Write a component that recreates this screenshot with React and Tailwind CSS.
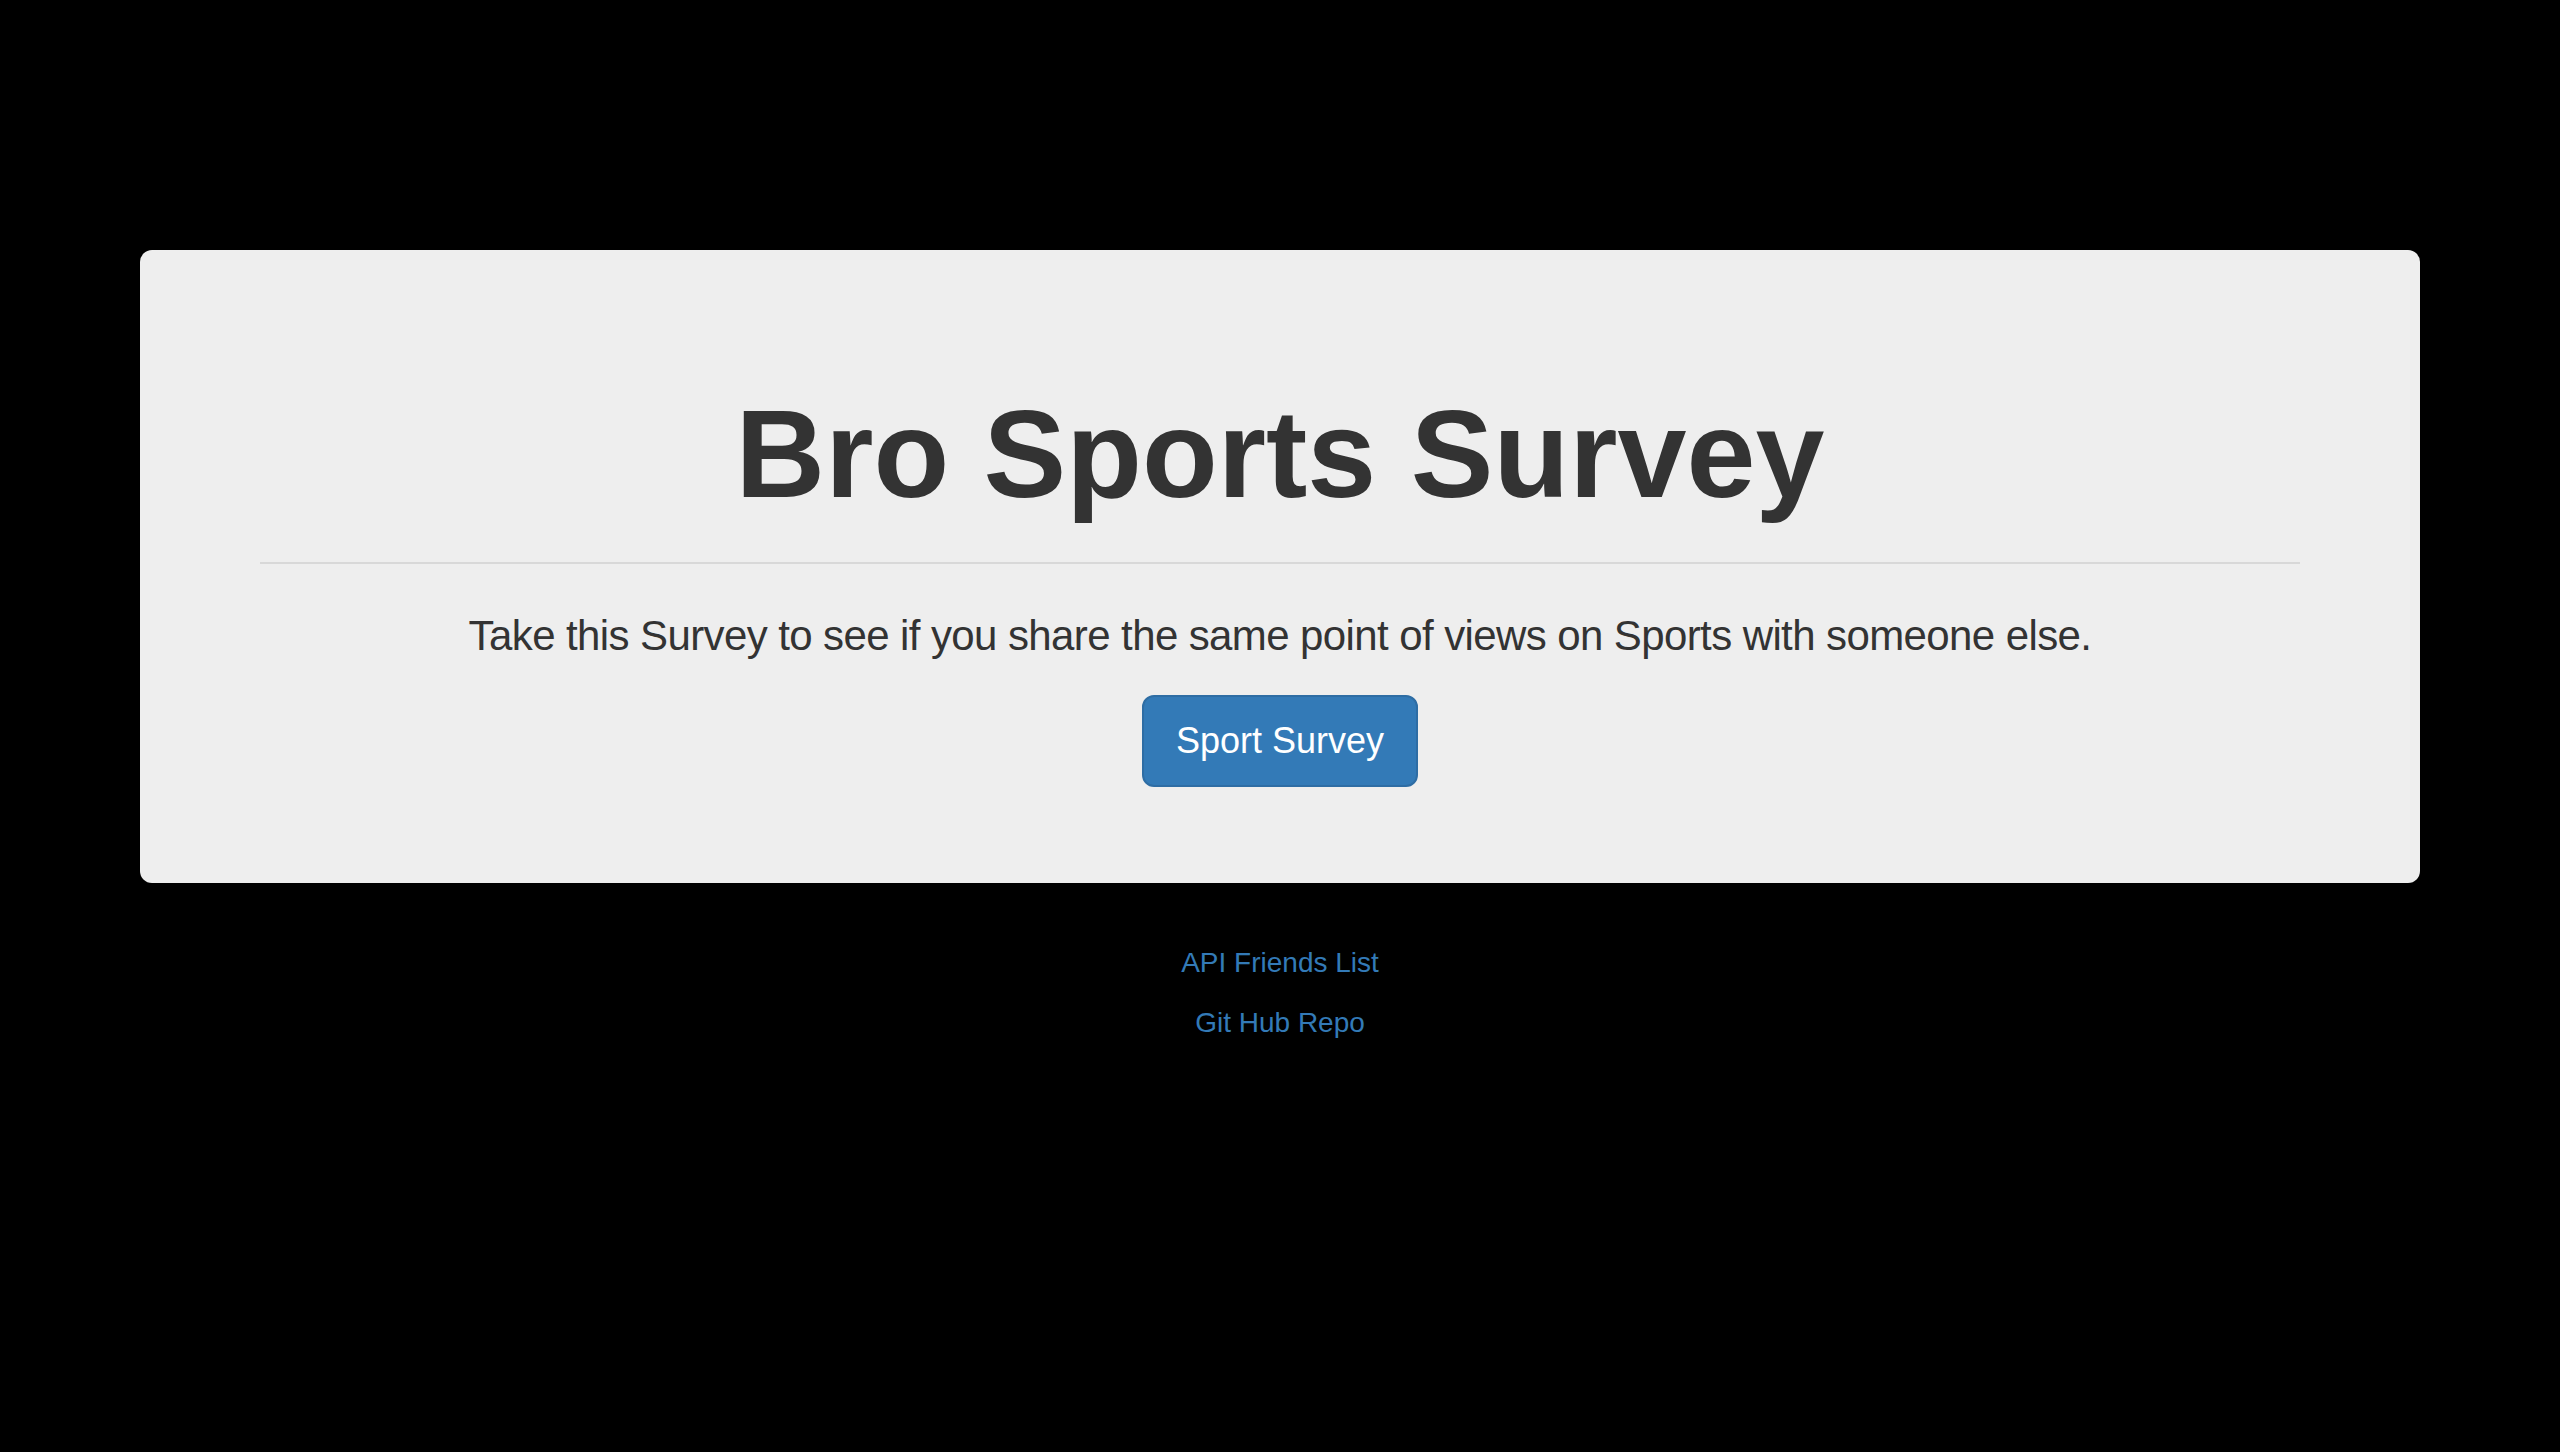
export default function App() {
  return (
    <div className="min-h-[1452px] w-full bg-black pt-[250px]" style={{ fontFamily: '"Liberation Sans", Arial, sans-serif' }}>
      <div className="mx-[140px] rounded-[12px] bg-[#eeeeee] px-[120px] pt-[96px] pb-[96px] text-center text-[#333333]">
        <h1 className="mt-[40px] text-[124px] font-bold leading-[1.1] text-[#333333]">Bro Sports Survey</h1>
        <hr className="mt-[40px] mb-[42px] border-0 border-t-2 border-[#d8d8d8]" />
        <p className="mb-[29px] text-[42px] font-light leading-[60px] tracking-[-0.6px] text-[#333333]">
          Take this Survey to see if you share the same point of views on Sports with someone else.
        </p>
        <div className="flex justify-center">
          <a
            href="#"
            className="inline-block rounded-[12px] border-2 border-[#2e6da4] bg-[#337ab7] px-[32px] py-[20px] text-[36px] leading-[48px] text-white"
          >
            Sport Survey
          </a>
        </div>
      </div>
      <div className="mt-[60px] flex flex-col items-center text-[28px] leading-[40px] text-[#337ab7]">
        <p className="mb-[20px]">
          <a href="#">API Friends List</a>
        </p>
        <p className="mb-[20px]">
          <a href="#">Git Hub Repo</a>
        </p>
      </div>
    </div>
  );
}
